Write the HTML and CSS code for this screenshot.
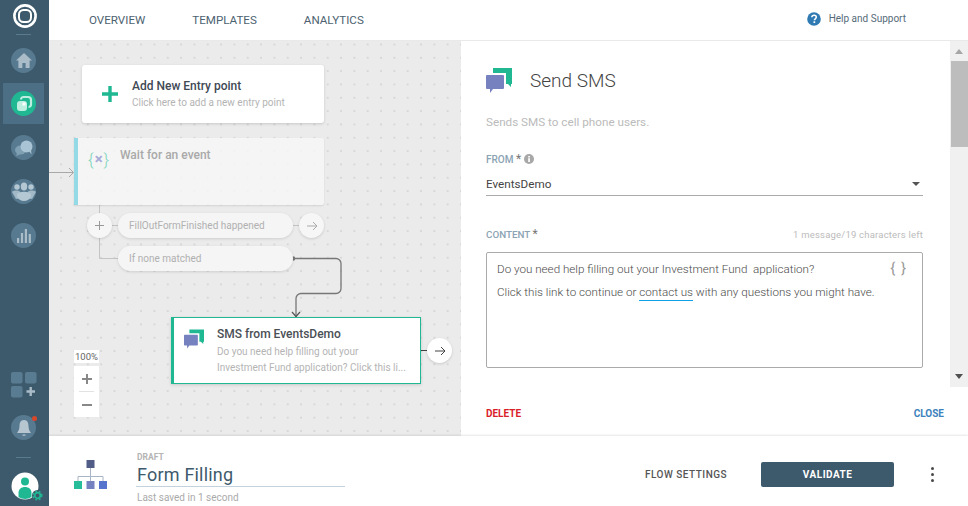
FILE: index.html
```html
<!DOCTYPE html>
<html lang="en">
<head>
<meta charset="utf-8">
<title>Send SMS flow</title>
<link rel="stylesheet" href="styles.css">
</head>
<body>
<div class="app">
  <aside class="sidebar">
    <div class="logo">
      <svg width="26" height="26" viewBox="0 0 26 26"><circle cx="13" cy="13" r="10.600" fill="none" stroke="#fff" stroke-width="2.600"/><rect x="7" y="7" width="12" height="12" rx="4.500" fill="none" stroke="#fff" stroke-width="2"/></svg>
    </div>
    <div class="rule"></div>
    <div class="nav-item first">
      <span class="nav-circle"><svg width="18" height="17" viewBox="0 0 18 17"><path d="M9 1 1 8.500h2.400V16h4v-5h3.200v5h4V8.500H17z" fill="#a9bcc8"/></svg></span>
    </div>
    <div class="nav-item active">
      <span class="nav-circle green"><svg width="18" height="18" viewBox="0 0 18 18"><path d="M6 4.500A2.500 2.500 0 0 1 8.500 2H13a3 3 0 0 1 3 3v4.500a2.500 2.500 0 0 1-2.500 2.500" fill="none" stroke="#bfeee0" stroke-width="2.200"/><rect x="2" y="6" width="10" height="10" rx="3" fill="#bfeee0"/><rect x="7.500" y="7.500" width="3" height="3" fill="#fff"/></svg></span>
    </div>
    <div class="nav-item">
      <span class="nav-circle"><svg width="20" height="18" viewBox="0 0 20 18"><ellipse cx="6.500" cy="11" rx="5.500" ry="4.500" fill="#7f9fb3"/><path d="M3 14.500 2 17l4-1.500z" fill="#7f9fb3"/><circle cx="12.500" cy="7.500" r="6" fill="#a9c4d4"/><path d="m15 12 2.500 3.500-.5-5z" fill="#a9c4d4"/></svg></span>
    </div>
    <div class="nav-item">
      <span class="nav-circle"><svg width="24" height="20" viewBox="0 0 24 20"><g fill="#b4c8d4"><circle cx="5" cy="5" r="2.700"/><circle cx="19" cy="5" r="2.700"/><ellipse cx="12" cy="4.500" rx="3.200" ry="4"/><path d="M0 10c1-2 8-2 8 0l1 6-5 1zM24 10c-1-2-8-2-8 0l-1 6 5 1z" opacity=".8"/><path d="M5 12c2-3 12-3 14 0v3c-1 2-4 4-7 4s-6-2-7-4z"/></g></svg></span>
    </div>
    <div class="nav-item">
      <span class="nav-circle"><svg width="16" height="16" viewBox="0 0 16 16"><g fill="#a9bcc8"><rect x="1" y="10" width="2.200" height="5"/><rect x="4.900" y="5" width="2.200" height="10"/><rect x="8.800" y="1" width="2.200" height="14"/><rect x="12.700" y="6" width="2.200" height="9"/></g></svg></span>
    </div>
    <div class="side-spacer"></div>
    <div class="apps">
      <svg width="26" height="26" viewBox="0 0 26 26"><g fill="#5a7c92"><rect x="0" y="0" width="11.500" height="11.500" rx="2"/><rect x="14" y="0" width="11.500" height="11.500" rx="2"/><rect x="0" y="14" width="11.500" height="11.500" rx="2"/></g><path d="M19.700 15v9M15.500 19.500h8.500" stroke="#a9bcc8" stroke-width="2.400"/></svg>
    </div>
    <div class="bell">
      <span class="nav-circle"><svg width="16" height="18" viewBox="0 0 16 18"><path d="M8 1c3.500 0 4.500 3 4.500 6 0 3 1 5 2.500 7H1c1.500-2 2.500-4 2.500-7 0-3 1-6 4.500-6z" fill="#b6c6d0"/><rect x="6.500" y="15.500" width="3" height="1.200" fill="#b6c6d0"/></svg></span>
      <i class="bell-dot"></i>
    </div>
    <div class="rule"></div>
    <div class="avatar">
      <svg width="28" height="28" viewBox="0 0 28 28"><circle cx="14" cy="14" r="13.500" fill="#fff"/><circle cx="14" cy="9.500" r="4" fill="#1fb893"/><path d="M7.500 25v-4c0-4 3-6 6.500-6s6.500 2 6.500 6v4c-4 2.500-9 2.500-13 0z" fill="#1fb893"/></svg>
      <svg class="gear" width="11" height="11" viewBox="0 0 11 11"><circle cx="5.500" cy="5.500" r="2.800" fill="none" stroke="#1fb893" stroke-width="1.800"/><circle cx="5.500" cy="5.500" r="4.400" fill="none" stroke="#1fb893" stroke-width="1.400" stroke-dasharray="1.800 1.800"/></svg>
    </div>
  </aside>

  <div class="workspace">
    <header class="topbar">
      <nav class="tabs">
        <a class="tab">OVERVIEW</a>
        <a class="tab">TEMPLATES</a>
        <a class="tab">ANALYTICS</a>
      </nav>
      <div class="help">
        <svg width="14" height="14" viewBox="0 0 14 14"><circle cx="7" cy="7" r="6.800" fill="#2f7ab3"/><path d="M4.800 5.300C4.900 3.900 5.800 3.200 7.100 3.200c1.300 0 2.200.8 2.200 1.900 0 1.700-1.900 1.700-1.900 3.200" fill="none" stroke="#fff" stroke-width="1.500"/><rect x="6.500" y="9.300" width="1.700" height="1.700" fill="#fff"/></svg>
        <span>Help and Support</span>
      </div>
    </header>

    <div class="middle">
      <section class="canvas">
        <svg class="wires" width="412" height="395" viewBox="0 0 412 395">
          <g fill="none" stroke="#c4c4c4">
            <path d="M0 131.500h24" stroke="#a8a8a8"/>
            <path d="m20 127 4.500 4.500-4.500 4.500" stroke="#a8a8a8"/>
            <path d="M50.500 164v53.500H70"/>
            <path d="M63 184.500h7M244 184.500h7"/>
          </g>
          <path d="M243 217.500h44a5 5 0 0 1 5 5v25a5 5 0 0 1-5 5h-35a5 5 0 0 0-5 5v18" fill="none" stroke="#777" stroke-width="1.300"/>
          <circle cx="244" cy="217.500" r="2.300" fill="#777"/>
          <path d="m243 271 4 4.500 4-4.500" fill="none" stroke="#555" stroke-width="1.200"/>
          <path d="M372 309.500h7" stroke="#444" fill="none"/>
        </svg>

        <div class="card entry">
          <svg class="entry-plus" width="16" height="16" viewBox="0 0 16 16"><path d="M8 0v16M0 8h16" stroke="#1fb893" stroke-width="3.400"/></svg>
          <div>
            <div class="card-title">Add New Entry point</div>
            <div class="card-sub">Click here to add a new entry point</div>
          </div>
        </div>

        <div class="card wait">
          <div class="wait-icon"><span class="brace">{</span><span class="cross">×</span><span class="brace">}</span></div>
          <div class="wait-title">Wait for an event</div>
        </div>

        <div class="round add">
          <svg width="11" height="11" viewBox="0 0 11 11"><path d="M5.500 1v9M1 5.500h9" stroke="#999" stroke-width="1"/></svg>
        </div>
        <div class="pill first">FillOutFormFinished happened</div>
        <div class="round next faded">
          <svg width="12" height="10" viewBox="0 0 12 10"><path d="M1 5h10M7 1l4 4-4 4" fill="none" stroke="#aaa"/></svg>
        </div>
        <div class="pill second">If none matched</div>

        <div class="sms-node">
          <svg class="sms-icon-small" width="20" height="20" viewBox="0 0 26 25"><path d="M7 0H26V16H25V19L22 16H20V5H7Z" fill="#1fb893"/><path d="M1 7H17A1 1 0 0 1 18 8V20A1 1 0 0 1 17 21H7L4 25V21H1A1 1 0 0 1 0 20V8A1 1 0 0 1 1 7Z" fill="#7681bf"/></svg>
          <div class="sms-body">
            <div class="sms-title">SMS from EventsDemo</div>
            <div class="sms-text">Do you need help filling out your<br>Investment Fund application? Click this li...</div>
          </div>
        </div>
        <div class="round next solid">
          <svg width="12" height="10" viewBox="0 0 12 10"><path d="M1 5h10M7 1l4 4-4 4" fill="none" stroke="#444"/></svg>
        </div>

        <div class="zoom-label">100%</div>
        <div class="zoom-box">
          <div class="zoom-btn"><svg width="12" height="12" viewBox="0 0 12 12"><path d="M6 1v10M1 6h10" stroke="#888" stroke-width="2"/></svg></div>
          <div class="zoom-sep"></div>
          <div class="zoom-btn"><svg width="12" height="12" viewBox="0 0 12 12"><path d="M1 6h10" stroke="#888" stroke-width="2"/></svg></div>
        </div>
      </section>

      <section class="panel">
        <div class="panel-main">
          <div class="panel-scroll">
            <div class="panel-head">
              <svg width="26" height="25" viewBox="0 0 26 25"><path d="M7 0H26V16H25V19L22 16H20V5H7Z" fill="#1fb893"/><path d="M1 7H17A1 1 0 0 1 18 8V20A1 1 0 0 1 17 21H7L4 25V21H1A1 1 0 0 1 0 20V8A1 1 0 0 1 1 7Z" fill="#7681bf"/></svg>
              <h1>Send SMS</h1>
            </div>
            <p class="desc">Sends SMS to cell phone users.</p>
            <div class="label-row">
              <label class="field-label">FROM <b>*</b></label>
              <svg width="10" height="10" viewBox="0 0 10 10"><circle cx="5" cy="5" r="5" fill="#a8a8a8"/><rect x="4.200" y="4.200" width="1.700" height="3.800" fill="#fff"/><rect x="4.200" y="2" width="1.700" height="1.500" fill="#fff"/></svg>
            </div>
            <div class="select">
              <span>EventsDemo</span>
              <i class="caret"></i>
            </div>
            <div class="content-row">
              <label class="field-label">CONTENT <b>*</b></label>
              <span class="counter">1 message/19 characters left</span>
            </div>
            <div class="textbox">
              <p>Do you need help filling out your Investment Fund&nbsp; application?</p>
              <p>Click this link to continue or <a class="link">contact us</a> with any questions you might have.</p>
              <span class="braces">{ }</span>
            </div>
          </div>
          <div class="scrollbar">
            <i class="arrow up"></i>
            <div class="thumb"></div>
            <div class="track"></div>
            <i class="arrow down"></i>
          </div>
        </div>
        <div class="panel-foot">
          <a class="delete">DELETE</a>
          <a class="close">CLOSE</a>
        </div>
      </section>
    </div>

    <footer class="bottombar">
      <svg class="flow-icon" width="33" height="29" viewBox="0 0 33 29">
        <path d="M16.500 8v14M4 22v-5.500h25V22" fill="none" stroke="#a9b4c4"/>
        <rect x="12.500" y="0" width="8" height="8" fill="#515d86"/>
        <rect x="0" y="21" width="8" height="8" fill="#27bd9a"/>
        <rect x="12.500" y="21" width="8" height="8" fill="#7681bf"/>
        <rect x="25" y="21" width="8" height="8" fill="#5673cd"/>
      </svg>
      <div class="flow-info">
        <div class="draft">DRAFT</div>
        <div class="flow-name">Form Filling</div>
        <div class="saved">Last saved in 1 second</div>
      </div>
      <a class="flow-settings">FLOW SETTINGS</a>
      <button class="validate">VALIDATE</button>
      <div class="kebab"><i></i><i></i><i></i></div>
    </footer>
  </div>
</div>
</body>
</html>
```

FILE: styles.css
```css
* { box-sizing: border-box; }
html, body { margin: 0; padding: 0; height: 100%; overflow: hidden; }
body { font-family: Roboto, "Liberation Sans", sans-serif; color: #444; background: #fff; }
.app { display: flex; width: 968px; height: 506px; }

.sidebar { width: 49px; background: #3d5a6c; display: flex; flex-direction: column; align-items: center; flex: none; padding-right: 2px; }
.logo { height: 34px; padding-top: 3px; margin-left: 2px; flex: none; }
.rule { width: 15px; height: 1px; background: #5a7a8e; flex: none; }
.nav-item { width: 41px; height: 41px; display: flex; align-items: center; justify-content: center; margin-top: 3px; flex: none; }
.nav-item.first { margin-top: 5px; }
.nav-item.active { background: #4d6f85; margin-top: 2px; }
.nav-circle { width: 25px; height: 25px; border-radius: 50%; background: #587a90; display: flex; align-items: center; justify-content: center; }
.nav-circle.green { background: #1fb893; }
.side-spacer { flex: 1; }
.apps { height: 26px; margin-bottom: 17px; flex: none; }
.bell { position: relative; width: 25px; height: 25px; margin-bottom: 17px; flex: none; }
.bell-dot { position: absolute; right: -1px; top: 1px; width: 5px; height: 5px; border-radius: 50%; background: #d9472b; }
.avatar { position: relative; width: 28px; height: 28px; margin: 14px 0 6px 2px; flex: none; }
.gear { position: absolute; right: -4px; bottom: -1px; background: #3d5a6c; border-radius: 50%; }

.workspace { flex: 1; display: flex; flex-direction: column; min-width: 0; }
.topbar { height: 41px; display: flex; align-items: center; justify-content: space-between; flex: none; border-bottom: 1px solid #e9e9e9; padding: 0 62px 0 40px; }
.tabs { display: flex; gap: 47px; }
.tab { font-size: 11.600px; color: #4d6271; }
.help { display: flex; align-items: center; gap: 8px; font-size: 10px; color: #566b79; margin-bottom: 3px; }

.middle { flex: 1; display: flex; min-height: 0; }
.canvas { position: relative; width: 412px; flex: none; background-color: #ebebeb; background-image: radial-gradient(circle at center, #bdbdbd 0, #bdbdbd .5px, transparent .8px); background-size: 13.330px 13.330px; background-position: 5.500px -3.200px; overflow: hidden; }
.wires { position: absolute; left: 0; top: 0; }

.card { position: absolute; border-radius: 3px; }
.entry { left: 33px; top: 24px; width: 242px; height: 58px; background: #fff; box-shadow: 0 1px 3px rgba(0,0,0,.15); display: flex; align-items: center; gap: 14px; padding: 0 20px; }
.entry-plus { flex: none; }
.card-title { font-size: 12px; font-weight: 500; color: #3f4a55; line-height: 16px; }
.card-sub { font-size: 10px; color: #b4b4b4; line-height: 16px; margin-top: 1px; }

.wait { left: 25px; top: 97px; width: 250px; height: 67px; background: rgba(247,247,247,.8); border-left: 4px solid #93d9e6; box-shadow: 0 1px 2px rgba(0,0,0,.1); border-radius: 0 3px 3px 0; }
.wait-icon { position: absolute; left: 10px; top: 11px; display: flex; align-items: center; font-size: 17px; line-height: 20px; font-weight: 300; }
.brace { color: #7fd6bb; }
.cross { color: #a6add6; font-size: 15px; font-weight: 700; margin: 0 1px; }
.wait-title { position: absolute; left: 42px; top: 9px; font-size: 12px; font-weight: 500; color: #a9a9a9; line-height: 16px; }

.round { position: absolute; width: 25px; height: 25px; border-radius: 50%; background: #f6f6f6; box-shadow: 0 1px 3px rgba(0,0,0,.14); display: flex; align-items: center; justify-content: center; }
.add { left: 38px; top: 172px; }
.next.faded { left: 250px; top: 172px; }
.next.solid { left: 378px; top: 297px; background: #fff; }
.pill { position: absolute; left: 69px; width: 175px; height: 25px; border-radius: 13px; background: #f5f5f5; box-shadow: 0 1px 3px rgba(0,0,0,.12); font-size: 10px; color: #b0b0b0; line-height: 25px; padding-left: 11px; }
.pill.first { top: 172px; }
.pill.second { top: 205px; }

.sms-node { position: absolute; left: 122px; top: 276px; width: 250px; height: 67px; background: #fff; border: 1px solid #1fb893; border-left-width: 3px; box-shadow: 0 1px 3px rgba(0,0,0,.15); display: flex; padding: 5px 0 0 10px; gap: 13px; }
.sms-icon-small { flex: none; margin-top: 6px; }
.sms-title { font-size: 12px; font-weight: 500; color: #4a4f55; line-height: 20px; margin-top: 1px; }
.sms-text { font-size: 10px; color: #b4b4b4; line-height: 16px; white-space: nowrap; }

.zoom-label { position: absolute; left: 25px; top: 309px; width: 25px; height: 13px; background: #fff; font-size: 9.500px; line-height: 13px; text-align: center; color: #666; }
.zoom-box { position: absolute; left: 25px; top: 325px; width: 25px; height: 51px; background: #fff; display: flex; flex-direction: column; align-items: center; }
.zoom-btn { height: 25px; display: flex; align-items: center; justify-content: center; flex: none; }
.zoom-sep { width: 15px; height: 1px; background: #e2e2e2; flex: none; }

.panel { flex: 1; display: flex; flex-direction: column; min-width: 0; background: #fff; }
.panel-main { height: 346px; display: flex; flex: none; }
.panel-scroll { flex: 1; padding: 27px 27px 0 25px; min-width: 0; }
.panel-head { display: flex; align-items: center; gap: 18px; height: 25px; }
.panel-head h1 { margin: 0; font-size: 19px; font-weight: 300; color: #444; }
.desc { margin: 21px 0 0; font-size: 11.700px; line-height: 16px; color: #bbb; }
.label-row { display: flex; align-items: center; gap: 3px; margin-top: 22px; height: 14px; }
.field-label { font-size: 10px; font-weight: 500; color: #8ba3b3; }
.field-label b { font-weight: 400; color: #777; font-size: 12px; }
.select { margin-top: 7px; height: 23px; border-bottom: 1px solid #aaa; display: flex; align-items: center; justify-content: space-between; font-size: 11.700px; color: #444; padding-right: 3px; }
.caret { width: 0; height: 0; border-left: 4px solid transparent; border-right: 4px solid transparent; border-top: 4px solid #555; }
.content-row { display: flex; justify-content: space-between; align-items: center; margin-top: 30px; height: 16px; }
.content-row .field-label { font-size: 9.800px; }
.counter { font-size: 9.500px; letter-spacing: .2px; color: #bbb; }
.textbox { position: relative; margin-top: 10px; height: 116px; border: 1px solid #aaa; border-radius: 2px; padding: 8px 10px; font-size: 11.650px; color: #4a4a4a; line-height: 16px; }
.textbox p { margin: 0 0 7px; white-space: nowrap; font-weight: 300; }
.link { border-bottom: 1px solid #0fa0e6; padding-bottom: 1px; }
.braces { position: absolute; right: 15px; top: 7px; font-size: 15px; color: #999; letter-spacing: 1px; }

.scrollbar { width: 18px; flex: none; background: #f0f0f0; display: flex; flex-direction: column; align-items: center; }
.arrow { width: 0; height: 0; flex: none; border-left: 4.500px solid transparent; border-right: 4.500px solid transparent; }
.arrow.up { border-bottom: 5px solid #a6a6a6; margin: 8px 0 7px; }
.arrow.down { border-top: 5px solid #505050; margin: 7px 0 8px; }
.thumb { width: 17px; height: 86px; background: #bdbdbd; flex: none; align-self: flex-end; }
.track { flex: 1; }

.panel-foot { flex: 1; display: flex; justify-content: space-between; align-items: center; padding: 4px 24px 0 25px; font-size: 10px; font-weight: 700; }
.delete { color: #d9202a; }
.close { color: #3d82bd; }

.bottombar { height: 70px; flex: none; display: flex; align-items: center; background: #fff; box-shadow: 0 -1px 2px rgba(0,0,0,.1); padding: 7px 0 0 25px; position: relative; }
.flow-icon { flex: none; }
.flow-info { margin: 7px 0 0 29px; width: 209px; }
.draft { font-size: 8.500px; font-weight: 700; color: #b4b4b4; line-height: 11px; padding-left: 1px; }
.flow-name { font-size: 18px; color: #3d5a6c; line-height: 20px; margin-top: 2px; border-bottom: 1px solid #c3d2dc; height: 22px; letter-spacing: .2px; padding-left: 1px; }
.saved { font-size: 10px; color: #aaa; line-height: 12px; margin-top: 5px; padding-left: 1px; }
.flow-settings { margin-left: 300px; font-size: 10px; font-weight: 500; letter-spacing: .5px; color: #555; white-space: nowrap; }
.validate { margin-left: 34px; width: 133px; height: 25px; border: 0; border-radius: 2px; background: #3d5a6c; color: #fff; font: 700 10px Roboto, sans-serif; letter-spacing: .5px; flex: none; }
.kebab { margin-left: 37px; width: 3px; display: flex; flex-direction: column; gap: 3px; flex: none; }
.kebab i { width: 3px; height: 3px; border-radius: 50%; background: #4a4a4a; }
```
